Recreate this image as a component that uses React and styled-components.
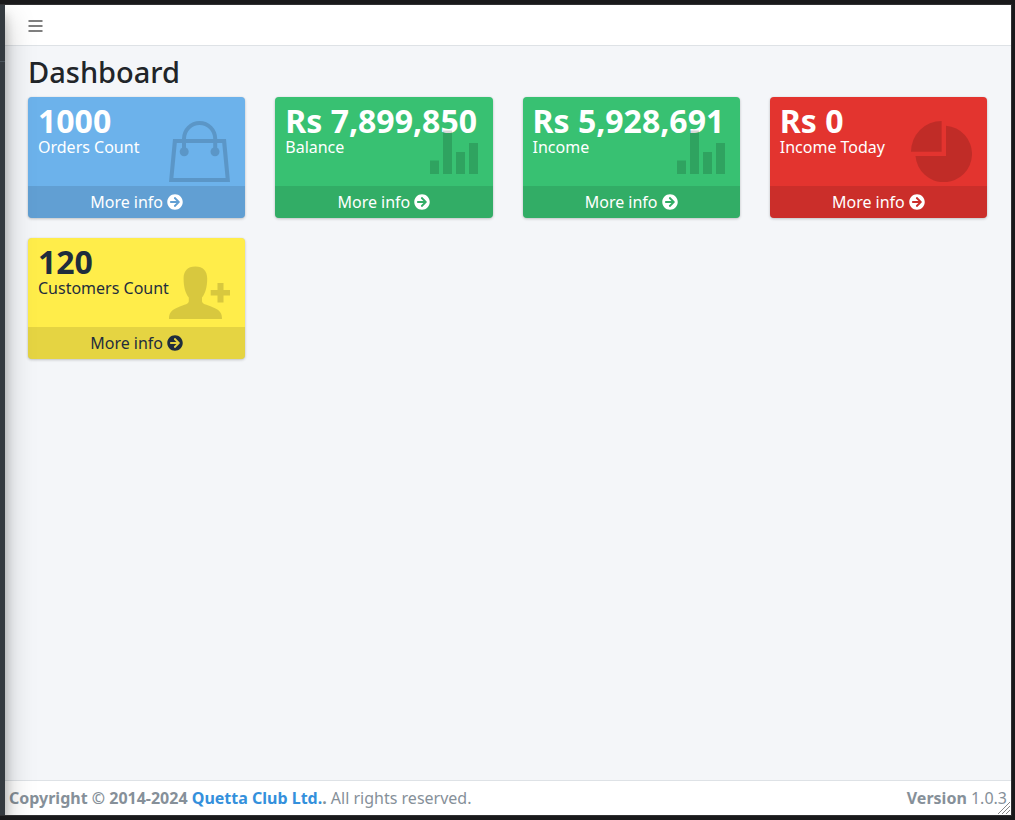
import React from "react";
import styled, { createGlobalStyle } from "styled-components";

const GlobalStyle = createGlobalStyle`
  *, *::before, *::after { box-sizing: border-box; }
  body {
    margin: 0;
    background: #19191b;
    color: #212529;
    font-family: "Noto Sans", sans-serif;
    font-size: 16px;
    line-height: 24px;
  }
`;

const Frame = styled.div`
  display: flex;
  min-height: 100vh;
  border: solid #19191b;
  border-width: 4px 3px 4px 0;
  padding: 1px 1px 1px 0;
  background: #303032;
  overflow: hidden;
`;

const Window = styled.div`
  display: flex;
  flex: 1;
  min-width: 0;
  overflow: hidden;
`;

const Sidebar = styled.aside`
  position: relative;
  z-index: 2;
  flex: none;
  width: 250px;
  margin-left: -245px;
  padding-top: 56px;
  background: #343a40;
  box-shadow: 0 14px 28px rgba(0, 0, 0, 0.25), 0 10px 10px rgba(0, 0, 0, 0.22);
`;

const SidebarRule = styled.div`
  height: 1px;
  background: #4b545c;
`;

const Page = styled.div`
  display: flex;
  flex: 1;
  flex-direction: column;
  min-width: 0;
  background: #f4f6f9;
`;

const TopBar = styled.header`
  display: flex;
  align-items: center;
  height: 41px;
  padding: 2px 23px 0;
  background: #fff;
  border-bottom: 1px solid #dee2e6;
`;

const MenuButton = styled.button`
  display: flex;
  padding: 0;
  border: 0;
  background: none;
  color: #7f7f7f;
  cursor: pointer;
`;

const Main = styled.main`
  flex: 1;
  padding: 8px 24px 8px 23px;
`;

const Title = styled.h1`
  margin: 0 0 8px;
  font-size: 29px;
  font-weight: 500;
  line-height: 35px;
`;

const Cards = styled.div`
  display: grid;
  grid-template-columns: repeat(4, minmax(0, 1fr));
  gap: 20px 30px;
`;

const Card = styled.section`
  position: relative;
  border-radius: 4px;
  overflow: hidden;
  background: ${(p) => p.$bg};
  color: ${(p) => p.$fg};
  box-shadow: 0 0 1px rgba(0, 0, 0, 0.125), 0 1px 3px rgba(0, 0, 0, 0.2);
`;

const CardBody = styled.div`
  padding: 10px 10px 27px;
`;

const Value = styled.h2`
  margin: 0;
  font-size: 32px;
  font-weight: 700;
  line-height: 28px;
  white-space: nowrap;
`;

const Label = styled.p`
  margin: 0;
`;

const CardIcon = styled.svg`
  position: absolute;
  top: 24px;
  right: 15px;
  width: 61px;
  height: 61px;
  fill: #000;
  opacity: 0.15;
  pointer-events: none;
`;

const MoreLink = styled.a`
  display: flex;
  align-items: center;
  justify-content: center;
  gap: 4px;
  padding: 4px 0;
  background: rgba(0, 0, 0, 0.1);
  color: inherit;
  text-decoration: none;
`;

const Footer = styled.footer`
  position: relative;
  display: flex;
  justify-content: space-between;
  padding: 5px 4px;
  background: #fff;
  border-top: 1px solid #dee2e6;
  color: #869099;
`;

const FooterLink = styled.a`
  color: #3490dc;
  text-decoration: none;
`;

const Grip = styled.svg`
  position: absolute;
  right: 0;
  bottom: 0;
`;

const icons = {
  bag: (
    <>
      <path
        fillRule="evenodd"
        d="M4 18H57L61 61H0ZM7.8 22L4.4 57H56.6L53.2 22Z"
      />
      <path d="M13 31V17.7a17.6 17.7 0 0 1 35.2 0V31h-4V17.7a13.6 13.7 0 0 0-27.2 0V31Z" />
      <circle cx="15.2" cy="30.8" r="4.5" />
      <circle cx="46" cy="30.8" r="4.5" />
    </>
  ),
  bars: (
    <path d="M13 39.5h9v13.500h-9ZM26 9.500h9v43.500h-9ZM39 31h9v22h-9ZM52 22h9v31h-9Z" />
  ),
  pie: (
    <>
      <path d="M30.600 0V30.700H0A30.600 30.700 0 0 1 30.600 0Z" />
      <path d="M35 4.700A28.300 28.300 0 1 1 4.500 35H35Z" />
    </>
  ),
  person: (
    <>
      <path d="M26.300 4.500C18.500 4.500 14.600 9 14.600 16.500C14.600 25 16.500 31.500 19.800 35.500V39.500C19.300 42.500 13 43.200 7 46.200C1.500 49 0 51.500 0 57H53C53 51.500 51.500 49 46 46.200C40 43.200 33.500 42.500 33 39.500V35.500C36.300 31.500 38.200 25 38.200 16.500C38.200 9 34.200 4.500 26.300 4.500Z" />
      <path d="M48.500 21h6v6.900h7v5.700h-7v7h-6v-7h-6.800v-5.700h6.800Z" />
    </>
  ),
};

const stats = [
  { value: "1000", label: "Orders Count", icon: "bag", bg: "#6cb2eb", fg: "#fff" },
  { value: "Rs 7,899,850", label: "Balance", icon: "bars", bg: "#38c172", fg: "#fff" },
  { value: "Rs 5,928,691", label: "Income", icon: "bars", bg: "#38c172", fg: "#fff" },
  { value: "Rs 0", label: "Income Today", icon: "pie", bg: "#e3342f", fg: "#fff" },
  { value: "120", label: "Customers Count", icon: "person", bg: "#ffed4a", fg: "#1f2d3d" },
];

function ArrowCircle() {
  return (
    <svg width="16" height="16" viewBox="0 0 512 512" fill="currentColor" aria-hidden="true">
      <path d="M256 8c137 0 248 111 248 248S393 504 256 504 8 393 8 256 119 8 256 8zm-28.900 143.600l75.500 72.400H120c-13.300 0-24 10.700-24 24v16c0 13.300 10.700 24 24 24h182.600l-75.500 72.400c-9.700 9.300-9.900 24.800-.4 34.300l11 10.900c9.400 9.400 24.600 9.400 33.900 0L404.300 273c9.400-9.400 9.400-24.600 0-33.900L271.600 106.300c-9.400-9.400-24.600-9.400-33.900 0l-11 10.900c-9.500 9.600-9.300 25.100.4 34.400z" />
    </svg>
  );
}

function StatCard({ value, label, icon, bg, fg }) {
  return (
    <Card $bg={bg} $fg={fg}>
      <CardBody>
        <Value>{value}</Value>
        <Label>{label}</Label>
      </CardBody>
      <CardIcon viewBox="0 0 61 61" aria-hidden="true">
        {icons[icon]}
      </CardIcon>
      <MoreLink href="#">
        More info <ArrowCircle />
      </MoreLink>
    </Card>
  );
}

export default function App() {
  return (
    <>
      <GlobalStyle />
      <Frame>
        <Window>
          <Sidebar>
            <SidebarRule />
          </Sidebar>
          <Page>
            <TopBar>
              <MenuButton type="button" aria-label="Toggle menu">
                <svg width="15" height="14" viewBox="0 0 15 14" fill="currentColor">
                  <path d="M.5 1h14v2H.5ZM.5 6h14v2H.5ZM.5 11h14v2H.5Z" />
                </svg>
              </MenuButton>
            </TopBar>
            <Main>
              <Title>Dashboard</Title>
              <Cards>
                {stats.map((s) => (
                  <StatCard key={s.label} {...s} />
                ))}
              </Cards>
            </Main>
            <Footer>
              <span>
                <strong>
                  Copyright © 2014-2024 <FooterLink href="#">Quetta Club Ltd.</FooterLink>.
                </strong>{" "}
                All rights reserved.
              </span>
              <span>
                <strong>Version</strong> 1.0.3
              </span>
              <Grip width="14" height="14" viewBox="0 0 14 14" stroke="#888" aria-hidden="true">
                <path d="M1 13L13 1M5 13L13 5M9 13L13 9" />
              </Grip>
            </Footer>
          </Page>
        </Window>
      </Frame>
    </>
  );
}
